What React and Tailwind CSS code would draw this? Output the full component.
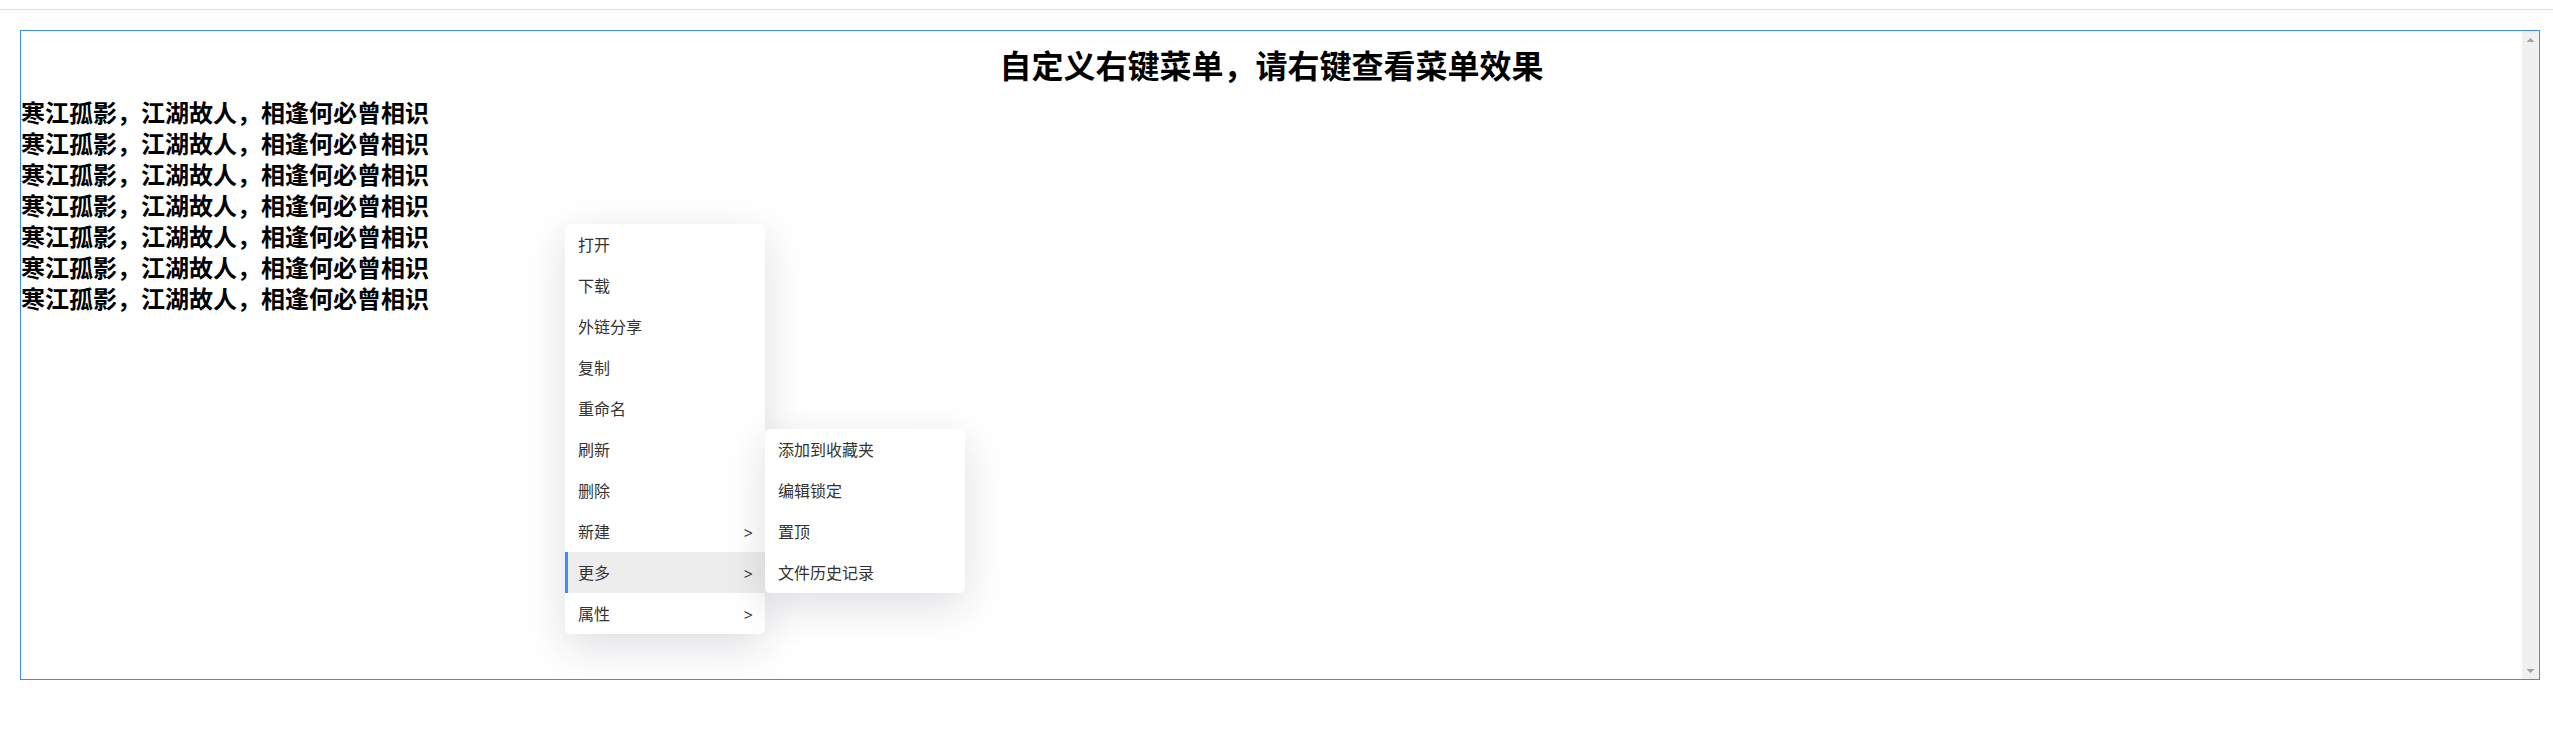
const lines = Array.from({ length: 7 }, () => '寒江孤影，江湖故人，相逢何必曾相识');

const moreItems = ['添加到收藏夹', '编辑锁定', '置顶', '文件历史记录'];

const menuItems = [
  { label: '打开' },
  { label: '下载' },
  { label: '外链分享' },
  { label: '复制' },
  { label: '重命名' },
  { label: '刷新' },
  { label: '删除' },
  { label: '新建', expandable: true },
  { label: '更多', expandable: true, active: true },
  { label: '属性', expandable: true },
];

function MenuItem({ label, expandable, active }) {
  return (
    <li role="none">
      <button
        type="button"
        role="menuitem"
        className={`flex h-[41px] w-full items-center justify-between border-l-3 pr-3 pl-[10px] text-left ${
          active ? 'border-[#3a8ef6] bg-[#ededed]' : 'border-transparent'
        }`}
      >
        <span className="pb-[2px]">{label}</span>
        {expandable && <span className="pt-[2px] font-['Open_Sans',sans-serif]">&gt;</span>}
      </button>
    </li>
  );
}

function Menu({ className, label, items }) {
  return (
    <ul
      role="menu"
      aria-label={label}
      className={`absolute w-[200px] overflow-hidden rounded-[5px] bg-white text-base text-[#333] shadow-[0_12px_40px_rgba(31,35,60,0.15)] ${className}`}
    >
      {items.map((item) => (
        <MenuItem key={item.label} {...item} />
      ))}
    </ul>
  );
}

function ScrollButton({ label, path }) {
  return (
    <button type="button" aria-label={label} className="flex h-[17px] items-center justify-center">
      <svg width="7" height="4" viewBox="0 0 7 4" fill="#a3a3a3" shapeRendering="crispEdges" aria-hidden="true">
        <path d={path} />
      </svg>
    </button>
  );
}

export default function App() {
  return (
    <div className="bg-white pt-[9px] font-['Noto_Sans_CJK_SC',sans-serif] text-black">
      <hr className="border-t border-[#e0e0e0]" />
      <main className="relative mt-5 mr-[13px] ml-5 flex h-[650px] border border-[#3a8ef6]">
        <div className="min-w-0 flex-1 pt-3">
          <h1 className="mb-[10px] text-center text-[32px] leading-[43px] font-bold">
            自定义右键菜单，请右键查看菜单效果
          </h1>
          {lines.map((line, i) => (
            <p key={i} className="text-2xl leading-[31px] font-bold">
              {line}
            </p>
          ))}
        </div>
        <div className="flex w-[17px] flex-col justify-between bg-[#f0f0f0]">
          <ScrollButton label="向上滚动" path="M3 0h1v1h1v1h1v1h1v1H0V3h1V2h1V1h1z" />
          <ScrollButton label="向下滚动" path="M0 0h7v1H6v1H5v1H4v1H3V3H2V2H1V1H0z" />
        </div>
        <Menu className="top-[193px] left-[544px]" label="右键菜单" items={menuItems} />
        <Menu
          className="top-[398px] left-[744px]"
          label="更多"
          items={moreItems.map((label) => ({ label }))}
        />
      </main>
    </div>
  );
}
